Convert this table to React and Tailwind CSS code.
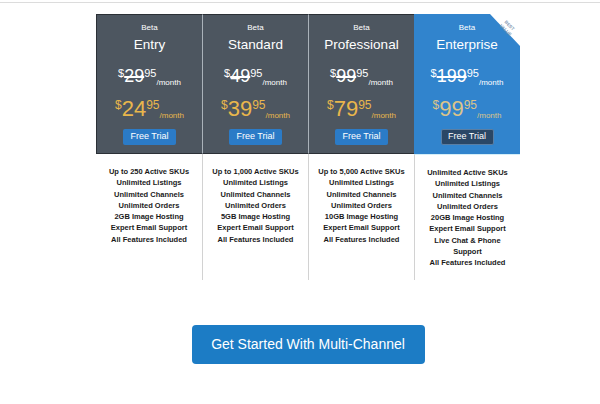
import React from 'react';

const plans = [
  {
    name: 'Entry',
    oldPrice: '29',
    newPrice: '24',
    features: ['Up to 250 Active SKUs', 'Unlimited Listings', 'Unlimited Channels', 'Unlimited Orders', '2GB Image Hosting', 'Expert Email Support', 'All Features Included'],
  },
  {
    name: 'Standard',
    oldPrice: '49',
    newPrice: '39',
    features: ['Up to 1,000 Active SKUs', 'Unlimited Listings', 'Unlimited Channels', 'Unlimited Orders', '5GB Image Hosting', 'Expert Email Support', 'All Features Included'],
  },
  {
    name: 'Professional',
    oldPrice: '99',
    newPrice: '79',
    features: ['Up to 5,000 Active SKUs', 'Unlimited Listings', 'Unlimited Channels', 'Unlimited Orders', '10GB Image Hosting', 'Expert Email Support', 'All Features Included'],
  },
  {
    name: 'Enterprise',
    oldPrice: '199',
    newPrice: '99',
    featured: true,
    features: ['Unlimited Active SKUs', 'Unlimited Listings', 'Unlimited Channels', 'Unlimited Orders', '20GB Image Hosting', 'Expert Email Support', 'Live Chat & Phone', 'Support', 'All Features Included'],
  },
];

const Price = ({ value, old, color }) => (
  <div className={`flex items-start justify-center leading-none ${color}`}>
    <span className={old ? 'text-[11px] mt-[1px]' : 'text-[12px] mt-[1px]'}>$</span>
    <span className={old ? 'text-[18px] line-through decoration-[1.5px]' : 'text-[22px]'}>{value}</span>
    <span className={old ? 'text-[11px] mt-[1px]' : 'text-[12px] mt-[1px]'}>95</span>
    <span className={old ? 'text-[8px] mt-[12px]' : 'text-[8px] mt-[14px]'}>/month</span>
  </div>
);

const Column = ({ plan, first }) => {
  const featured = plan.featured;
  return (
    <div className="w-[106px] flex flex-col">
      <div
        className={`relative h-[140px] flex flex-col items-center text-white ${
          featured
            ? 'bg-[#3184cd] [clip-path:polygon(0_0,calc(100%_-_30px)_0,100%_32px,100%_100%,0_100%)]'
            : 'bg-[#4d5660] border-t border-b border-[#2b3036]'
        } ${first ? 'border-l border-l-[#2b3036]' : featured ? '' : 'border-l border-l-[#aab2ba]'}`}
      >
        <div className={`text-[8px] leading-none ${featured ? 'mt-[10px]' : 'mt-[9px]'}`}>Beta</div>
        <div className="text-[13.5px] leading-none mt-[6px]">{plan.name}</div>
        <div className="mt-[15px]">
          <Price value={plan.oldPrice} old color="text-white" />
        </div>
        <div className="mt-[11px]">
          <Price value={plan.newPrice} color={featured ? 'text-[#dcc48a]' : 'text-[#e9b64c]'} />
        </div>
        <div
          className={`mt-[9px] w-[53px] h-[16px] flex items-center justify-center text-[9px] rounded-[2px] ${
            featured ? 'bg-[#2a4766] border border-[#5a7ea3]' : 'bg-[#2b7bc7]'
          }`}
        >
          Free Trial
        </div>
      </div>
      <div
        className={`h-[126px] pt-[12px] flex flex-col items-center text-[7.5px] font-bold leading-[11.3px] text-[#1a1a1a] ${
          first ? '' : 'border-l border-[#d2d2d2]'
        } ${featured ? 'border-t border-t-[#d4eef8]' : ''}`}
      >
        {plan.features.map((f) => (
          <div key={f}>{f}</div>
        ))}
      </div>
    </div>
  );
};

export default function App() {
  return (
    <div className="w-[600px] h-[404px] bg-white overflow-hidden" style={{ fontFamily: '"Liberation Sans", Arial, sans-serif' }}>
      <div className="h-[2px]" />
      <div className="h-[1px] bg-[#dcdcdc]" />
      <div className="h-[11px]" />
      <div className="relative ml-[96px] flex">
        {plans.map((p, i) => (
          <Column key={p.name} plan={p} first={i === 0} />
        ))}
        <div className="absolute left-[404px] top-[8px] w-[14px] rotate-45 text-center text-[4.5px] font-bold leading-[6px] text-[#7f98b3]">
          BEST VALUE
        </div>
      </div>
      <div className="flex justify-center mt-[45px] pl-[16px]">
        <div className="w-[233px] h-[39px] bg-[#1c7cc5] rounded-[4px] flex items-center justify-center text-white text-[14px]">
          Get Started With Multi-Channel
        </div>
      </div>
    </div>
  );
}
